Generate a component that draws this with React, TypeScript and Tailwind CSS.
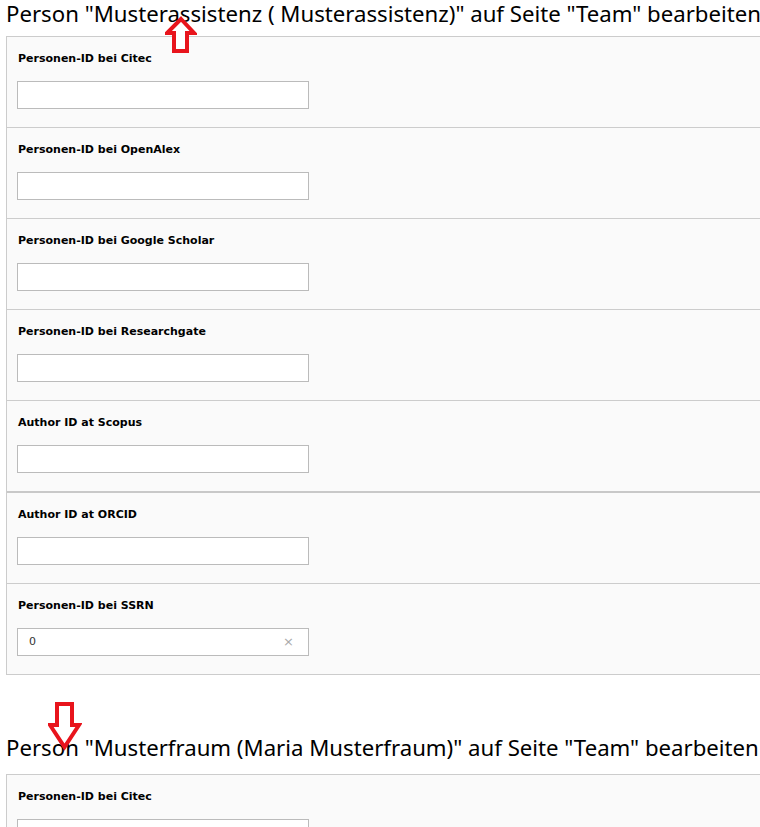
import React from 'react';

interface Field {
  label: string;
  value?: string;
  thick?: boolean;
}

const fields: Field[] = [
  { label: 'Personen-ID bei Citec' },
  { label: 'Personen-ID bei OpenAlex' },
  { label: 'Personen-ID bei Google Scholar' },
  { label: 'Personen-ID bei Researchgate' },
  { label: 'Author ID at Scopus', thick: true },
  { label: 'Author ID at ORCID' },
  { label: 'Personen-ID bei SSRN', value: '0' },
];

const ArrowUp = () => (
  <svg width="32" height="38" viewBox="0 0 32 38" className="absolute left-[165px] top-[16px]">
    <polygon
      points="16,3 29,17 22,17 22,35 9,35 9,17 2,17"
      fill="white"
      stroke="#e8141c"
      strokeWidth="4"
      strokeLinejoin="miter"
    />
  </svg>
);

const ArrowDown = () => (
  <svg width="34" height="50" viewBox="0 0 34 50" className="absolute left-[48px] top-[701px]">
    <polygon
      points="9,3 24,3 24,24 31,24 16.5,46 2,24 9,24"
      fill="white"
      stroke="#e8141c"
      strokeWidth="4"
      strokeLinejoin="miter"
    />
  </svg>
);

const Row: React.FC<{ field: Field; last: boolean }> = ({ field, last }) => (
  <div
    className={
      last
        ? 'px-[11px] pt-[15px] pb-[18px]'
        : field.thick
        ? 'px-[11px] pt-[15px] pb-[18px] border-b-2 border-[#c8c8c8]'
        : 'px-[11px] pt-[15px] pb-[18px] border-b border-[#cccccc]'
    }
  >
    <div className="h-[14px] leading-[14px] text-[11px] font-bold text-black font-['DejaVu_Sans',Verdana,sans-serif]">
      {field.label}
    </div>
    <div className="mt-[15px] -ml-px w-[292px] h-[28px] bg-white border border-[#bbbbbb] flex items-center justify-between px-[11px]">
      <span className="text-[11px] text-[#333] font-['DejaVu_Sans',Verdana,sans-serif]">{field.value ?? ''}</span>
      {field.value !== undefined && (
        <span className="text-[13px] text-[#aaaaaa] font-['DejaVu_Sans',sans-serif] mr-[3px]">×</span>
      )}
    </div>
  </div>
);

const Panel: React.FC<{ title: string; items: Field[]; gap: string }> = ({ title, items, gap }) => (
  <div>
    <h1
      className={
        gap === 'wide'
          ? "pl-[6px] whitespace-nowrap text-[22.2px] leading-[28px] text-black font-['Noto_Sans','Open_Sans',sans-serif] mb-[12px]"
          : "pl-[6px] whitespace-nowrap text-[22.2px] leading-[28px] text-black font-['Noto_Sans','Open_Sans',sans-serif] mb-[8px]"
      }
    >
      {title}
    </h1>
    <div className="ml-[6px] w-[800px] bg-[#fafafa] border border-[#cccccc]">
      {items.map((f, i) => (
        <Row key={i} field={f} last={i === items.length - 1} />
      ))}
    </div>
  </div>
);

export default function App() {
  return (
    <div className="relative w-[760px] h-[827px] overflow-hidden bg-white">
      <Panel
        title={'Person "Musterassistenz ( Musterassistenz)" auf Seite "Team" bearbeiten'}
        items={fields}
        gap="normal"
      />
      <div className="mt-[59px]">
        <Panel
          title={'Person "Musterfraum (Maria Musterfraum)" auf Seite "Team" bearbeiten'}
          items={fields.slice(0, 1)}
          gap="wide"
        />
      </div>
      <ArrowUp />
      <ArrowDown />
    </div>
  );
}
